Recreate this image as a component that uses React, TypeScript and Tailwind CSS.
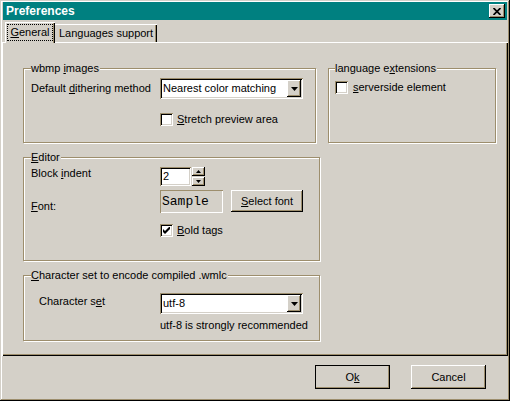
import type { ReactNode } from 'react';

// Win2000 classic bevels, shadow tone as seen in the screenshot
const raised =
  'shadow-[inset_-1px_-1px_0_#000,inset_1px_1px_0_#fff,inset_-2px_-2px_0_#9d8e6d]';
const sunken =
  'shadow-[inset_1px_1px_0_#9d8e6d,inset_-1px_-1px_0_#fff,inset_2px_2px_0_#000,inset_-2px_-2px_0_#d4d0c8]';

function Group({
  label,
  className,
  children,
}: {
  label: ReactNode;
  className: string;
  children?: ReactNode;
}) {
  return (
    <fieldset
      className={`border border-[#9d8e6d] shadow-[inset_1px_1px_0_#fff,1px_1px_0_#fff] ${className}`}
    >
      <legend className="bg-[#d4d0c8] leading-[13px] pr-[1px]">{label}</legend>
      {children}
    </fieldset>
  );
}

function Check({ checked = false }: { checked?: boolean }) {
  return (
    <div
      className={`w-[13px] h-[13px] shrink-0 bg-white flex items-center justify-center ${sunken}`}
    >
      {checked && (
        <svg width="7" height="7" viewBox="0 0 7 7">
          <path d="M0 2 L2 4 L7 -1 L7 2 L2 7 L0 5 Z" fill="#000" />
        </svg>
      )}
    </div>
  );
}

function Combo({ value }: { value: string }) {
  return (
    <div
      className={`w-[143px] h-[21px] bg-white flex items-center pl-[3px] pr-[2px] ${sunken}`}
    >
      <span className="flex-1">{value}</span>
      <div
        className={`w-[14px] h-[17px] bg-[#d4d0c8] flex items-center justify-center ${raised}`}
      >
        <svg width="7" height="4" viewBox="0 0 7 4">
          <polygon points="0,0 7,0 3.5,4" fill="#000" />
        </svg>
      </div>
    </div>
  );
}

function Button({
  children,
  isDefault = false,
  className = '',
}: {
  children: ReactNode;
  isDefault?: boolean;
  className?: string;
}) {
  return (
    <div
      className={`flex items-center justify-center bg-[#d4d0c8] ${raised} ${
        isDefault ? 'outline outline-1 outline-black -outline-offset-1' : ''
      } ${className}`}
    >
      {children}
    </div>
  );
}

export default function App() {
  return (
    <div className="w-[510px] h-[401px] bg-[#d4d0c8] flex flex-col px-[2px] pt-[2px] font-['Liberation_Sans',Arial,sans-serif] text-[11px] leading-[13px] text-black select-none shadow-[inset_-1px_-1px_0_#000,inset_1px_1px_0_#d4d0c8,inset_-2px_-2px_0_#9d8e6d,inset_2px_2px_0_#fff]">
      {/* title bar */}
      <div className="mx-[1px] h-[18px] bg-[#008080] flex items-center justify-between pl-[3px] pr-[2px]">
        <span className="text-white font-bold text-[12px]">Preferences</span>
        <div
          className={`w-[16px] h-[14px] bg-[#d4d0c8] flex items-center justify-center ${raised}`}
        >
          <svg width="8" height="7" viewBox="0 0 8 7">
            <path d="M0.5 0 L7.5 7 M7.5 0 L0.5 7" stroke="#000" strokeWidth="1.7" />
          </svg>
        </div>
      </div>

      {/* tabs */}
      <div className="mt-[2px] h-[20px] flex items-end pl-[3px] relative z-10">
        <div className="w-[50px] h-[21px] -mb-[1px] bg-[#d4d0c8] flex justify-center pt-[2px] shadow-[inset_1px_1px_0_#fff,inset_-1px_0_0_#000,inset_-2px_0_0_#9d8e6d]">
          <div className="w-[46px] h-[17px] border border-dotted border-black flex items-center justify-center">
            <span>
              <u>G</u>eneral
            </span>
          </div>
        </div>
        <div className="w-[102px] h-[18px] flex items-center justify-center shadow-[inset_0_1px_0_#fff,inset_-1px_0_0_#000,inset_-2px_0_0_#9d8e6d]">
          Languages support
        </div>
      </div>

      {/* tab panel */}
      <div className="h-[314px] pt-[20px] pl-[21px] flex flex-col shadow-[inset_1px_1px_0_#fff,inset_-1px_-1px_0_#000,inset_-2px_-2px_0_#9d8e6d]">
        <div className="flex">
          <Group label={<>wbmp <u>i</u>mages</>} className="w-[293px] h-[81px] pl-[7px]">
            <div className="flex items-center h-[21px] mt-[3px]">
              <span className="w-[129px]">
                Default <u>d</u>ithering method
              </span>
              <Combo value="Nearest color matching" />
            </div>
            <div className="flex items-center mt-[14px] ml-[129px]">
              <Check />
              <span className="ml-[4px]">
                <u>S</u>tretch preview area
              </span>
            </div>
          </Group>
          <Group
            label={<>language e<u>x</u>tensions</>}
            className="w-[168px] h-[81px] ml-[12px] pl-[6px]"
          >
            <div className="flex items-center mt-[6px]">
              <Check />
              <span className="ml-[5px]">
                <u>s</u>erverside element
              </span>
            </div>
          </Group>
        </div>

        <Group label={<><u>E</u>ditor</>} className="w-[297px] h-[110px] mt-[8px] pl-[7px]">
          <div className="flex items-start mt-[3px]">
            <span className="w-[129px]">
              Block <u>i</u>ndent
            </span>
            <div className={`w-[31px] h-[19px] bg-white flex items-center pl-[3px] ${sunken}`}>
              2
            </div>
            <div className="ml-[1px] flex flex-col gap-[1px]">
              <div className={`w-[13px] h-[9px] bg-[#d4d0c8] flex items-center justify-center ${raised}`}>
                <svg width="5" height="3" viewBox="0 0 5 3">
                  <polygon points="2.5,0 5,3 0,3" fill="#000" />
                </svg>
              </div>
              <div className={`w-[13px] h-[9px] bg-[#d4d0c8] flex items-center justify-center ${raised}`}>
                <svg width="5" height="3" viewBox="0 0 5 3">
                  <polygon points="0,0 5,0 2.5,3" fill="#000" />
                </svg>
              </div>
            </div>
          </div>
          <div className="flex items-start mt-[4px]">
            <span className="w-[129px] mt-[10px]">
              <u>F</u>ont:
            </span>
            <div className="w-[63px] h-[23px] flex items-center pl-[2px] font-['Liberation_Mono','Courier_New',monospace] text-[13px] shadow-[inset_1px_1px_0_#9d8e6d,inset_-1px_-1px_0_#fff]">
              Sample
            </div>
            <Button className="w-[72px] h-[22px] ml-[8px]">
              <span>
                <u>S</u>elect font
              </span>
            </Button>
          </div>
          <div className="flex items-center mt-[11px] ml-[129px]">
            <Check checked />
            <span className="ml-[4px]">
              <u>B</u>old tags
            </span>
          </div>
        </Group>

        <Group
          label={<><u>C</u>haracter set to encode compiled .wmlc</>}
          className="w-[297px] h-[72px] mt-[8px] pl-[7px]"
        >
          <div className="flex items-start mt-[11px]">
            <span className="w-[129px] pl-[8px] mt-[2px]">
              Character s<u>e</u>t
            </span>
            <Combo value="utf-8" />
          </div>
          <div className="ml-[129px] mt-[5px]">utf-8 is strongly recommended</div>
        </Group>
      </div>

      {/* dialog buttons */}
      <div className="flex justify-end gap-[21px] pr-[22px] pt-[9px]">
        <Button isDefault className="w-[75px] h-[24px]">
          <span>
            O<u>k</u>
          </span>
        </Button>
        <Button className="w-[75px] h-[24px]">Cancel</Button>
      </div>
    </div>
  );
}
